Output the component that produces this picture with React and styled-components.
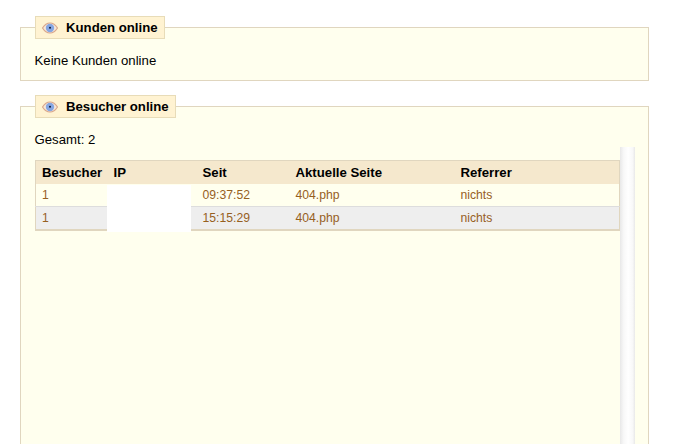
import React from 'react';
import styled, { createGlobalStyle } from 'styled-components';

const Global = createGlobalStyle`
  html, body { margin: 0; padding: 0; background: #fff; height: 444px; overflow: hidden; }
  body { font-family: "Liberation Sans", Arial, sans-serif; color: #000; }
`;
const Page = styled.div`
  width: 692px; height: 444px; overflow: hidden; box-sizing: border-box;
  padding: 16px 43px 0 20px; display: flex; flex-direction: column; gap: 14px;
`;
const Panel = styled.fieldset`
  margin: 0; min-width: 0; background: #ffffee; border: 1px solid #e0d6bf;
  padding: ${p => p.$pad}; height: ${p => p.$h}; box-sizing: border-box; flex: none;
`;
const Legend = styled.legend`
  display: flex; align-items: center; gap: 8px; box-sizing: border-box; height: 23px;
  padding: 0 6px; background: #fff3d2; border: 1px solid #e8dcb8;
  font-size: 13.2px; font-weight: 700; line-height: 20px;
`;
const Note = styled.div`font-size: 13.2px; line-height: 16px; margin-left: -0.5px;`;
const Scroll = styled.div`display: flex; align-items: stretch; height: 320px; margin-top: -1px;`;
const TableWrap = styled.div`position: relative; width: 585px; padding-top: 13px; flex: none;`;
const Table = styled.table`
  width: 585px; box-sizing: border-box; border-collapse: collapse; table-layout: fixed;
  border: 1px solid #e0d6bf; border-bottom-width: 2px;
`;
const Th = styled.th`
  background: #f5e8cd; height: 23px; padding: 0 0 0 6px; text-align: left;
  font-size: 13.2px; font-weight: 700; color: #000;
`;
const Row = styled.tr`
  background: ${p => p.$alt ? '#eeeeee' : '#ffffee'};
  border-top: ${p => p.$alt ? '1px solid #dddddd' : '0'};
`;
const Td = styled.td`height: 22px; padding: 0 0 0 6px; color: #96601f; font-size: 12.2px;`;
const Redact = styled.div`
  position: absolute; left: 72px; top: 38px; width: 84px; height: 47px; background: #fff;
`;
const Bar = styled.div`
  width: 15px; flex: none; background: linear-gradient(to right, #e8e8e8, #f8f8f8 25%, #ffffff 55%, #f8f8f8 85%, #e8e8e8);
`;

const Eye = () => (
  <svg width="16" height="12" viewBox="0 0 16 12">
    <path d="M0.5 6C3 2 5.500 1 8 1s5 1 7.500 5c-2.500 4-5 5-7.500 5s-5-1-7.500-5z" fill="#f6e6d6" stroke="#d8a68c" strokeWidth="1.200" />
    <circle cx="8" cy="6" r="4.200" fill="#86a6e2" />
    <circle cx="8" cy="5.800" r="1" fill="#101830" />
  </svg>
);

const rows = [
  ['1', '09:37:52', '404.php', 'nichts'],
  ['1', '15:15:29', '404.php', 'nichts'],
];

export default function App() {
  return (
    <>
      <Global />
      <Page>
        <Panel $pad="14px 14px 9px" $h="65px">
          <Legend><Eye />Kunden online</Legend>
          <Note>Keine Kunden online</Note>
        </Panel>
        <Panel $pad="14px 14px 0" $h="400px">
          <Legend><Eye />Besucher online</Legend>
          <Note>Gesamt: 2</Note>
          <Scroll>
            <TableWrap>
              <Table>
                <colgroup>
                  <col style={{ width: 72 }} /><col style={{ width: 89 }} /><col style={{ width: 93 }} /><col style={{ width: 165 }} /><col />
                </colgroup>
                <thead>
                  <tr><Th>Besucher</Th><Th>IP</Th><Th>Seit</Th><Th>Aktuelle Seite</Th><Th>Referrer</Th></tr>
                </thead>
                <tbody>
                  {rows.map((r, i) => (
                    <Row key={i} $alt={i === 1}>
                      <Td>{r[0]}</Td><Td></Td><Td>{r[1]}</Td><Td>{r[2]}</Td><Td>{r[3]}</Td>
                    </Row>
                  ))}
                </tbody>
              </Table>
              <Redact />
            </TableWrap>
            <Bar />
          </Scroll>
        </Panel>
      </Page>
    </>
  );
}
